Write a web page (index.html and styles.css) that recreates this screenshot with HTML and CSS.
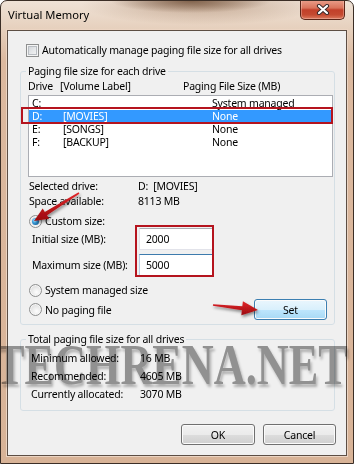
FILE: index.html
```html
<!DOCTYPE html>
<html>
<head>
<meta charset="utf-8">
<title>Virtual Memory</title>
<link rel="stylesheet" href="styles.css">
</head>
<body>
<div class="window">
  <div class="titlebar">
    <span class="title">Virtual Memory</span>
    <div class="close">
      <svg width="14" height="11" viewBox="0 0 14 11">
        <path d="M3 2 L11 9 M11 2 L3 9" stroke="#3b2b2b" stroke-width="4.2" stroke-linecap="round" fill="none"/>
        <path d="M3 2 L11 9 M11 2 L3 9" stroke="#ffffff" stroke-width="2.2" stroke-linecap="round" fill="none"/>
      </svg>
    </div>
  </div>
  <div class="client">
    <div class="check-row"><span class="checkbox"></span><span>Automatically manage paging file size for all drives</span></div>

    <fieldset class="group group-drives">
      <legend>Paging file size for each drive</legend>
      <div class="list-head"><span class="h-drive">Drive</span><span class="h-label">[Volume Label]</span><span>Paging File Size (MB)</span></div>
      <div class="listbox">
        <div class="row"><span class="c-drive">C:</span><span class="c-label"></span><span>System managed</span></div>
        <div class="row selected"><span class="c-drive">D:</span><span class="c-label">[MOVIES]</span><span>None</span><div class="hl-box hl-row"></div></div>
        <div class="row"><span class="c-drive">E:</span><span class="c-label">[SONGS]</span><span>None</span></div>
        <div class="row"><span class="c-drive">F:</span><span class="c-label">[BACKUP]</span><span>None</span></div>
      </div>
      <div class="info-row first"><span class="info-label">Selected drive:</span><span>D:&nbsp; [MOVIES]</span></div>
      <div class="info-row"><span class="info-label">Space available:</span><span>8113 MB</span></div>
      <div class="radio-row custom"><span class="radio checked"></span><span>Custom size:</span></div>
      <div class="size-fields">
        <div class="field-row"><span class="field-label">Initial size (MB):</span><span class="input">2000</span></div>
        <div class="field-row"><span class="field-label">Maximum size (MB):</span><span class="input focus">5000</span></div>
        <div class="hl-box hl-fields"></div>
      </div>
      <div class="radio-row system"><span class="radio"></span><span>System managed size</span></div>
      <div class="radio-row last"><span class="radio"></span><span>No paging file</span><button class="btn btn-set">Set</button></div>
    </fieldset>

    <fieldset class="group group-total">
      <legend>Total paging file size for all drives</legend>
      <div class="total-row"><span class="total-label">Minimum allowed:</span><span>16 MB</span></div>
      <div class="total-row"><span class="total-label">Recommended:</span><span>4605 MB</span></div>
      <div class="total-row"><span class="total-label">Currently allocated:</span><span>3070 MB</span></div>
    </fieldset>

    <div class="buttons">
      <button class="btn btn-ok">OK</button>
      <button class="btn btn-cancel">Cancel</button>
    </div>
  </div>

  <div class="watermark">TECHRENA.NET</div>

  <svg class="arrows" width="354" height="464" viewBox="0 0 354 464">
    <defs>
      <linearGradient id="ar" x1="0" y1="0" x2="0" y2="1">
        <stop offset="0" stop-color="#e2262a"/>
        <stop offset="1" stop-color="#9a0a0e"/>
      </linearGradient>
      <filter id="sh" x="-20%" y="-20%" width="140%" height="160%">
        <feDropShadow dx="1" dy="2" stdDeviation="1.4" flood-color="#000" flood-opacity="0.45"/>
      </filter>
    </defs>
    <polygon filter="url(#sh)" fill="url(#ar)" points="78.6,192.3 44.8,211.9 42.7,208.5 34,221 49.1,218.7 47,215.3 79.4,193.7"/>
    <polygon filter="url(#sh)" fill="url(#ar)" points="213.1,304.2 242.3,306.2 242.9,301.3 258,310 241.3,315.2 241.9,310.2 212.9,305.8"/>
  </svg>
</div>
</body>
</html>
```

FILE: styles.css
```css
* { box-sizing: border-box; }

html, body {
  margin: 0;
  padding: 0;
}

body {
  width: 354px;
  height: 464px;
  overflow: hidden;
  background: #ffffff;
  font-family: "Noto Sans", "DejaVu Sans", sans-serif;
  font-size: 10.5px;
  letter-spacing: -0.2px;
  color: #000;
  white-space: nowrap;
}

.window {
  position: relative;
  width: 354px;
  height: 464px;
  border: 1px solid #3b2e26;
  border-radius: 7px 7px 0 0;
  padding: 0 6px 7px;
  display: flex;
  flex-direction: column;
  background:
    radial-gradient(ellipse 80px 12px at 190px 0px, rgba(110, 78, 55, 0.8), rgba(110, 78, 55, 0) 100%),
    radial-gradient(ellipse 120px 20px at 200px 4px, rgba(150, 110, 80, 0.45), rgba(150, 110, 80, 0) 100%),
    linear-gradient(180deg, #efe2d6 0px, #e6d0bd 28px, #dcb99f 60px, #d8b397 100%);
  overflow: hidden;
}

.titlebar {
  height: 29px;
  margin: 0 -6px;
  padding-left: 7px;
  display: flex;
  justify-content: space-between;
  align-items: flex-start;
  flex-shrink: 0;
}

.title {
  font-size: 11.2px;
  letter-spacing: 0;
  line-height: 28px;
  color: #000;
}

.close {
  width: 45px;
  height: 20px;
  margin: -1px 8px 0 0;
  border: 1px solid #5a2518;
  border-top: none;
  border-radius: 0 0 5px 5px;
  background: linear-gradient(180deg, #eaa08c 0%, #d9735b 42%, #c2402a 52%, #c54a31 78%, #dc7a5f 100%);
  box-shadow: inset 0 0 0 1px rgba(255, 220, 210, 0.35);
  display: flex;
  align-items: center;
  justify-content: center;
}

.close svg { display: block; }

.client {
  flex: 1;
  background: #f0f0f0;
  border: 1px solid #5d4e44;
  box-shadow: 0 0 0 1px #ebd4c2;
  padding: 0 11px 0 12px;
  display: flex;
  flex-direction: column;
}

/* checkbox row */
.check-row {
  margin: 13px 0 0 6px;
  height: 13px;
  line-height: 13px;
  display: flex;
  align-items: center;
  gap: 3px;
}

.checkbox {
  width: 13px;
  height: 13px;
  flex-shrink: 0;
  border: 1px solid #8e8f8f;
  background: linear-gradient(135deg, #cbcfd4 0%, #e4e6e8 50%, #f8f8f8 100%);
  box-shadow: inset 0 0 0 1px #f4f4f4, inset 0 0 0 2px #b9bdc2;
}

/* group boxes */
.group {
  margin: 7px 0 0;
  padding: 0 1px 4px 7px;
  border: 1px solid #d5dfe5;
  border-radius: 3px;
  min-width: 0;
  position: relative;
}

.group legend {
  padding: 0 2px;
  margin-left: -2px;
  height: 14px;
  line-height: 14px;
  color: #000;
}

.list-head {
  margin-top: 1px;
  height: 15px;
  line-height: 15px;
  display: flex;
}

.h-drive { width: 32px; }
.h-label { width: 123px; }

.listbox {
  margin-top: 1px;
  height: 82px;
  background: #fff;
  border: 1px solid #abadb3;
  padding-top: 1px;
}

.row {
  position: relative;
  height: 13px;
  line-height: 13px;
  padding-left: 3px;
  display: flex;
}

.row.selected {
  background: #3399ff;
  color: #fff;
}

.c-drive { width: 31px; }
.c-label { width: 149px; }

.hl-box {
  position: absolute;
  border: 2px solid #b5141e;
}

.hl-row {
  left: -8px;
  top: -3px;
  width: 312px;
  height: 17px;
}

.info-row {
  height: 15px;
  line-height: 15px;
  padding-left: 1px;
  display: flex;
}

.info-row.first { margin-top: 2px; }

.info-label { width: 109px; }

.radio-row {
  display: flex;
  align-items: center;
  gap: 3px;
  height: 14px;
  padding-left: 1px;
}

.radio-row.custom { margin-top: 5px; }
.radio-row.system { margin-top: 7px; }
.radio-row.last { margin-top: 2px; height: 21px; }

.radio {
  width: 13px;
  height: 13px;
  flex-shrink: 0;
  border-radius: 50%;
  border: 1px solid #8e8f8f;
  background: radial-gradient(circle at 60% 65%, #fdfdfd 0%, #e6e6e6 55%, #cfcfcf 100%);
  box-shadow: inset 0 0 0 1px #f6f6f6;
  position: relative;
}

.radio.checked::after {
  content: "";
  position: absolute;
  left: 2px;
  top: 2px;
  width: 7px;
  height: 7px;
  border-radius: 50%;
  background: radial-gradient(circle at 40% 35%, #b8ecff 0%, #3aa0e0 40%, #13609a 85%, #0c4a7a 100%);
}

.size-fields {
  position: relative;
  display: flex;
  flex-direction: column;
  gap: 4px;
}

.field-row {
  height: 22px;
  display: flex;
  align-items: center;
}

.field-label {
  width: 111px;
  padding-left: 4px;
}

.input {
  width: 75px;
  height: 22px;
  line-height: 20px;
  background: #fff;
  border: 1px solid #e2e3ea;
  border-top-color: #abadb3;
  padding-left: 6px;
}

.input.focus {
  border-color: #b5cfe7;
  border-top-color: #3d7bad;
}

.hl-fields {
  left: 107px;
  top: -3px;
  width: 79px;
  height: 52px;
}

.btn {
  font-family: inherit;
  font-size: inherit;
  letter-spacing: inherit;
  color: #000;
  height: 21px;
  padding: 0;
  border: 1px solid #707070;
  border-radius: 3px;
  background: linear-gradient(180deg, #f2f2f2 0%, #ebebeb 50%, #dddddd 51%, #cfcfcf 100%);
  box-shadow: inset 0 0 0 1px #fbfbfb;
}

.btn-set {
  margin-left: auto;
  margin-right: 6px;
  width: 73px;
  border-color: #3c7fb1;
  background: linear-gradient(180deg, #eaf6fd 0%, #d9f0fc 50%, #bee6fd 51%, #a7d9f5 100%);
}

.group-total {
  padding-top: 3px;
  padding-bottom: 7px;
}

.total-row {
  height: 18px;
  line-height: 18px;
  padding-left: 3px;
  display: flex;
}

.total-label { width: 109px; }

.buttons {
  margin-top: 13px;
  margin-right: -1px;
  display: flex;
  justify-content: flex-end;
  gap: 8px;
}

.btn-ok { width: 74px; }
.btn-cancel { width: 73px; }

/* overlays */
.watermark {
  position: absolute;
  left: -6px;
  top: 336px;
  font-family: "Liberation Serif", serif;
  font-weight: bold;
  font-size: 56px;
  line-height: 56px;
  letter-spacing: 0;
  white-space: nowrap;
  color: #9a9a9a;
  mix-blend-mode: multiply;
  text-shadow: 2px 3px 3px rgba(0, 0, 0, 0.28);
  transform: scaleX(0.79);
  transform-origin: 0 0;
  pointer-events: none;
}

.arrows {
  position: absolute;
  left: -1px;
  top: -1px;
  pointer-events: none;
}
```
